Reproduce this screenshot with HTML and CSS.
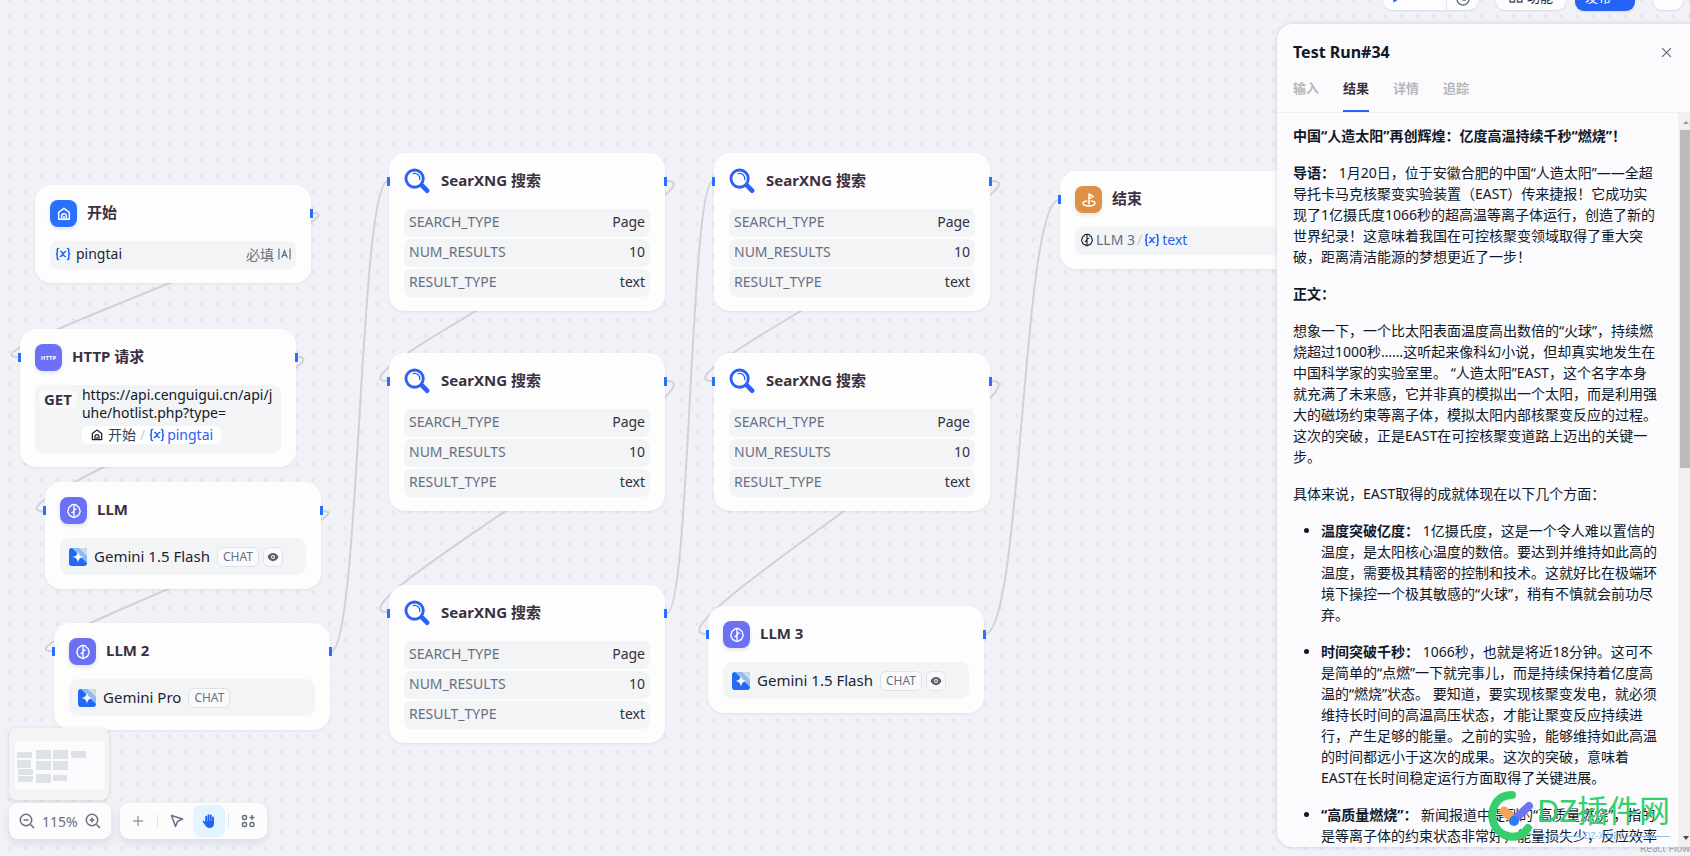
FILE: index.html
```html
<!DOCTYPE html>
<html lang="zh-CN">
<head>
<meta charset="utf-8">
<title>Workflow</title>
<link rel="stylesheet" href="styles.css">
</head>
<body>
<svg class="defs" aria-hidden="true">
  <defs>
    <symbol id="i-home" viewBox="0 0 24 24"><path d="M4 20V9.500L12 3.500L20 9.500V20Z" fill="none" stroke="currentColor" stroke-width="2.200" stroke-linejoin="round"/><path d="M8.500 20V15a3.500 3.500 0 0 1 7 0V20M12 20V15" fill="none" stroke="currentColor" stroke-width="2.200"/></symbol>
    <symbol id="i-brain" viewBox="0 0 24 24"><path d="M12 2.500C9.800 1.800 7.500 3 7 5C4.600 5.500 3.200 7.800 3.800 10C2.200 11.500 2.400 14.500 4.200 15.800C4.300 18.300 6.300 20 8.500 19.800C9.500 21.600 11 21.800 12 21.300C13 21.800 14.500 21.600 15.500 19.800C17.700 20 19.700 18.300 19.800 15.800C21.600 14.500 21.800 11.500 20.200 10C20.800 7.800 19.400 5.500 17 5C16.500 3 14.200 1.800 12 2.500ZM12 3V21M8 14.500C10 14.500 12 13.500 12 11M12 12C12 9.500 14 9 16 9" fill="none" stroke="currentColor" stroke-width="2"/></symbol>
    <symbol id="i-flag" viewBox="0 0 24 24"><path d="M12 18V3L18.500 6.500L12 10M8.500 13.500C5 14 3 15.300 3 17C3 19.300 7 21 12 21C17 21 21 19.300 21 17C21 15.300 19 14 15.500 13.500" fill="none" stroke="currentColor" stroke-width="2.200" stroke-linecap="round" stroke-linejoin="round"/></symbol>
    <symbol id="i-search" viewBox="0 0 28 28"><path d="M18 17.500L24 23.500" stroke="#2b62f5" stroke-width="5" stroke-linecap="round"/><circle cx="11" cy="11" r="9" fill="#fff" stroke="#2b62f5" stroke-width="3"/><path d="M9.500 5.800C13.500 4.800 17 8 16.300 12" fill="none" stroke="#2b62f5" stroke-width="1.300" stroke-linecap="round"/></symbol>
    <symbol id="i-gem" viewBox="0 0 18 18"><rect width="18" height="18" rx="3" fill="#2468f6"/><path d="M3 0H15A3 3 0 0 1 18 3V15L3 0Z" fill="#8cbcf8"/><path d="M10 0H15A3 3 0 0 1 18 3V8Z" fill="#d5dcda"/><path d="M9 3C9.500 7 11 8.500 15 9C11 9.500 9.500 11 9 15C8.500 11 7 9.500 3 9C7 8.500 8.500 7 9 3Z" fill="#fff"/></symbol>
    <symbol id="i-eye" viewBox="0 0 14 12"><path d="M0.500 6C3 -0.600 11 -0.600 13.500 6C11 12.600 3 12.600 0.500 6Z" fill="#5b5e6b"/><circle cx="7" cy="6" r="2.400" fill="#f5f5f7"/><circle cx="7" cy="6" r="1.200" fill="#5b5e6b"/></symbol>
    <symbol id="i-var" viewBox="0 0 16 14"><path d="M3.500 1.500C1.800 1.500 2.300 3.500 2.300 5C2.300 6.300 1.700 7 0.900 7C1.700 7 2.300 7.700 2.300 9C2.300 10.500 1.800 12.500 3.500 12.500M12.500 1.500C14.200 1.500 13.700 3.500 13.700 5C13.700 6.300 14.300 7 15.100 7C14.300 7 13.700 7.700 13.700 9C13.700 10.500 14.200 12.500 12.500 12.500M5.800 4.500C8 4 8 10 10.200 9.500M10.800 4.500C9 4.200 7 9.800 5.200 9.500" fill="none" stroke="#2563f5" stroke-width="1.500" stroke-linecap="round"/></symbol>
  </defs>
</svg>

<main class="canvas">
  <svg class="edges" aria-hidden="true">
    <path d="M312 213C376 213 -46 357 18 357"/>
    <path d="M297 357C357 357 -17 511 43 511"/>
    <path d="M322 511C382 511 -8 651 52 651"/>
    <path d="M331 651C360 651 359 181 388 181"/>
    <path d="M667 181C731 181 323 381 387 381"/>
    <path d="M667 381C731 381 323 612 387 612"/>
    <path d="M667 613C690 613 690 181 713 181"/>
    <path d="M992 181C1056 181 648 381 712 381"/>
    <path d="M992 381C1056 381 642 634 706 634"/>
    <path d="M985 634C1022 634 1022 200 1059 200"/>
  </svg>

  <section class="node out n-start">
    <header><span class="badge blue"><svg><use href="#i-home"/></svg></span><h2>开始</h2></header>
    <div class="row"><span class="var"><svg class="vx"><use href="#i-var"/></svg>pingtai</span><span class="req">必填 <svg class="txt" viewBox="0 0 14 12"><path d="M1 0V12M13 0V12M4 10L7 2.500L10 10M5 7.500H9" fill="none" stroke="#676f83" stroke-width="1.300"/></svg></span></div>
  </section>

  <section class="node in out n-http">
    <header><span class="badge violet"><b>HTTP</b></span><h2>HTTP 请求</h2></header>
    <div class="request"><span class="method">GET</span>
      <div class="url">https://api.cenguigui.cn/api/j<br>uhe/hotlist.php?type=<br><span class="chip"><svg class="mini"><use href="#i-home"/></svg>开始<i>/</i><em><svg class="vx"><use href="#i-var"/></svg>pingtai</em></span></div>
    </div>
  </section>

  <section class="node in out n-llm1">
    <header><span class="badge violet"><svg><use href="#i-brain"/></svg></span><h2>LLM</h2></header>
    <div class="model"><svg class="gem"><use href="#i-gem"/></svg><span>Gemini 1.5 Flash</span><small>CHAT</small><small class="see"><svg><use href="#i-eye"/></svg></small></div>
  </section>

  <section class="node in out n-llm2">
    <header><span class="badge violet"><svg><use href="#i-brain"/></svg></span><h2>LLM 2</h2></header>
    <div class="model"><svg class="gem"><use href="#i-gem"/></svg><span>Gemini Pro</span><small>CHAT</small></div>
  </section>

  <section class="node in out n-s1">
    <header><svg class="glass"><use href="#i-search"/></svg><h2>SearXNG 搜索</h2></header>
    <dl><div><dt>SEARCH_TYPE</dt><dd>Page</dd></div><div><dt>NUM_RESULTS</dt><dd>10</dd></div><div><dt>RESULT_TYPE</dt><dd>text</dd></div></dl>
  </section>
  <section class="node in out n-s2">
    <header><svg class="glass"><use href="#i-search"/></svg><h2>SearXNG 搜索</h2></header>
    <dl><div><dt>SEARCH_TYPE</dt><dd>Page</dd></div><div><dt>NUM_RESULTS</dt><dd>10</dd></div><div><dt>RESULT_TYPE</dt><dd>text</dd></div></dl>
  </section>
  <section class="node in out n-s3">
    <header><svg class="glass"><use href="#i-search"/></svg><h2>SearXNG 搜索</h2></header>
    <dl><div><dt>SEARCH_TYPE</dt><dd>Page</dd></div><div><dt>NUM_RESULTS</dt><dd>10</dd></div><div><dt>RESULT_TYPE</dt><dd>text</dd></div></dl>
  </section>
  <section class="node in out n-s4">
    <header><svg class="glass"><use href="#i-search"/></svg><h2>SearXNG 搜索</h2></header>
    <dl><div><dt>SEARCH_TYPE</dt><dd>Page</dd></div><div><dt>NUM_RESULTS</dt><dd>10</dd></div><div><dt>RESULT_TYPE</dt><dd>text</dd></div></dl>
  </section>
  <section class="node in out n-s5">
    <header><svg class="glass"><use href="#i-search"/></svg><h2>SearXNG 搜索</h2></header>
    <dl><div><dt>SEARCH_TYPE</dt><dd>Page</dd></div><div><dt>NUM_RESULTS</dt><dd>10</dd></div><div><dt>RESULT_TYPE</dt><dd>text</dd></div></dl>
  </section>

  <section class="node in out n-llm3">
    <header><span class="badge violet"><svg><use href="#i-brain"/></svg></span><h2>LLM 3</h2></header>
    <div class="model"><svg class="gem"><use href="#i-gem"/></svg><span>Gemini 1.5 Flash</span><small>CHAT</small><small class="see"><svg><use href="#i-eye"/></svg></small></div>
  </section>

  <section class="node in n-end">
    <header><span class="badge orange"><svg><use href="#i-flag"/></svg></span><h2>结束</h2></header>
    <div class="row"><span class="ref"><svg class="mini"><use href="#i-brain"/></svg>LLM 3<i>/</i><em><svg class="vx"><use href="#i-var"/></svg>text</em></span></div>
  </section>

  <span class="credit">React Flow</span>
</main>

<nav class="topbar">
  <div class="group"><button class="run" aria-label="运行"><svg viewBox="0 0 12 12"><path d="M2 0L11 5L2 11Z" fill="#2563f5"/></svg></button><button class="history" aria-label="历史"><svg viewBox="0 0 14 14"><circle cx="7" cy="7" r="6" fill="none" stroke="#676f83" stroke-width="1.500"/><path d="M7 3V8H10" fill="none" stroke="#676f83" stroke-width="1.500"/></svg></button></div>
  <button class="feature"><svg viewBox="0 0 14 14"><path d="M1 1H5.500V5.500H1ZM8.500 1H13V5.500H8.500ZM1 8.500H5.500V13H1ZM8.500 8.500H13V13H8.500Z" fill="none" stroke="#495464" stroke-width="1.400"/></svg>功能</button>
  <button class="publish">发布 <svg viewBox="0 0 10 10"><path d="M2 3L5 6L8 3" fill="none" stroke="#fff" stroke-width="1.500"/></svg></button>
  <button class="more" aria-label="更多"><svg viewBox="0 0 14 14"><path d="M5 8V12M5 8H9" fill="none" stroke="#676f83" stroke-width="1.500"/></svg></button>
</nav>

<aside class="panel">
  <header class="panel-head"><h1>Test Run#34</h1><button aria-label="关闭"><svg viewBox="0 0 10 10"><path d="M1 1L9 9M9 1L1 9" stroke="#676f83" stroke-width="1.200"/></svg></button></header>
  <div class="tabs" role="tablist"><button role="tab">输入</button><button role="tab" class="on" aria-selected="true">结果</button><button role="tab">详情</button><button role="tab">追踪</button></div>
  <div class="body">
    <article>
      <p><strong>中国“人造太阳”再创辉煌：亿度高温持续千秒“燃烧”！</strong></p>
      <p><strong>导语：</strong> 1月20日，位于安徽合肥的中国“人造太阳”——全超<br>导托卡马克核聚变实验装置（EAST）传来捷报！它成功实<br>现了1亿摄氏度1066秒的超高温等离子体运行，创造了新的<br>世界纪录！这意味着我国在可控核聚变领域取得了重大突<br>破，距离清洁能源的梦想更近了一步！</p>
      <p><strong>正文：</strong></p>
      <p>想象一下，一个比太阳表面温度高出数倍的“火球”，持续燃<br>烧超过1000秒……这听起来像科幻小说，但却真实地发生在<br>中国科学家的实验室里。 “人造太阳”EAST，这个名字本身<br>就充满了未来感，它并非真的模拟出一个太阳，而是利用强<br>大的磁场约束等离子体，模拟太阳内部核聚变反应的过程。<br>这次的突破，正是EAST在可控核聚变道路上迈出的关键一<br>步。</p>
      <p>具体来说，EAST取得的成就体现在以下几个方面：</p>
      <ul>
        <li><strong>温度突破亿度：</strong> 1亿摄氏度，这是一个令人难以置信的<br>温度，是太阳核心温度的数倍。要达到并维持如此高的<br>温度，需要极其精密的控制和技术。这就好比在极端环<br>境下操控一个极其敏感的“火球”，稍有不慎就会前功尽<br>弃。</li>
        <li><strong>时间突破千秒：</strong> 1066秒，也就是将近18分钟。这可不<br>是简单的“点燃”一下就完事儿，而是持续保持着亿度高<br>温的“燃烧”状态。 要知道，要实现核聚变发电，就必须<br>维持长时间的高温高压状态，才能让聚变反应持续进<br>行，产生足够的能量。之前的实验，能够维持如此高温<br>的时间都远小于这次的成果。这次的突破，意味着<br>EAST在长时间稳定运行方面取得了关键进展。</li>
        <li><strong>“高质量燃烧”：</strong> 新闻报道中提到的“高质量燃烧”，指的<br>是等离子体的约束状态非常好，能量损失少，反应效率</li>
      </ul>
    </article>
    <div class="track"><span class="up"></span><span class="thumb"></span><span class="down"></span></div>
  </div>
</aside>

<div class="minimap">
  <svg viewBox="0 0 90 48"><rect width="90" height="48" fill="#fbfbfd"/><g fill="#dee1e6"><rect x="2" y="11" width="15" height="6"/><rect x="2" y="19" width="14" height="8"/><rect x="3" y="28" width="15" height="6"/><rect x="3" y="35" width="15" height="6"/><rect x="21" y="9" width="15" height="9"/><rect x="21" y="20" width="15" height="9"/><rect x="21" y="33" width="15" height="9"/><rect x="38" y="9" width="15" height="9"/><rect x="38" y="20" width="15" height="9"/><rect x="38" y="34" width="14" height="6"/><rect x="56" y="10" width="15" height="7"/></g></svg>
</div>

<div class="tools">
  <div class="bar zoom">
    <button aria-label="缩小"><svg viewBox="0 0 16 16"><path d="M11.500 11.500L15 15M4.500 7H9.500" /><circle cx="7" cy="7" r="5.700"/></svg></button><span>115%</span><button aria-label="放大"><svg viewBox="0 0 16 16"><path d="M11.500 11.500L15 15M4.500 7H9.500M7 4.500V9.500"/><circle cx="7" cy="7" r="5.700"/></svg></button>
  </div>
  <div class="bar modes">
    <button class="add" aria-label="添加"><svg viewBox="0 0 16 16"><path d="M8 3V13M3 8H13"/></svg></button><hr>
    <button aria-label="指针"><svg viewBox="0 0 16 16"><path d="M2.500 2.500L13.500 6L8.500 8.500L6.500 13.500Z" stroke-linejoin="round"/></svg></button>
    <button class="on" aria-label="手形"><svg viewBox="0 0 16 16"><path d="M5.200 9V3.800M7.500 8V2.200M9.800 8V2.500M12 9V4.500" stroke="#2563f5" stroke-width="1.900" stroke-linecap="round"/><path d="M4.300 8H13V10.500C13 13.500 11 15 8.700 15C6.500 15 5.300 14 4.300 12.500L1.900 9C1.500 8 2.600 7.500 3.300 8.200L4.300 9.300Z" fill="#2563f5" stroke="none"/></svg></button><hr>
    <button aria-label="整理"><svg viewBox="0 0 16 16"><rect x="2.500" y="2.500" width="4" height="4" rx="1.500"/><rect x="2.500" y="9.500" width="4" height="4" rx="1.500"/><rect x="10" y="9.500" width="4" height="4" rx="1.500"/><path d="M12 2V7M9.500 4.500H14.500"/></svg></button>
  </div>
</div>

<div class="mark" aria-hidden="true">
  <svg viewBox="0 0 50 52"><path d="M25 5C8 5 2 22 7 34C13 48 32 52 41 38" fill="none" stroke="#36cf6d" stroke-width="8" stroke-linecap="round"/><path d="M17 21L24 27" stroke="#f5a55a" stroke-width="9" stroke-linecap="round"/><path d="M27 30L42 16" stroke="#6f74f3" stroke-width="8" stroke-linecap="round"/><circle cx="27" cy="31" r="5" fill="#2b7cf5"/></svg>
  <div><b>DZ插件网</b><p><span>DZ-X.NET</span></p></div>
</div>
</body>
</html>
```

FILE: styles.css
```css
* { box-sizing: border-box; }
body {
  margin: 0;
  height: 100vh;
  position: relative;
  overflow: hidden;
  font-family: "Noto Sans", "Noto Sans CJK SC", sans-serif;
  font-size: 14px;
  color: #1d2433;
}
h1, h2, p, dl, dd, ul { margin: 0; }
button { font: inherit; color: inherit; border: 0; background: none; padding: 0; }
svg { flex: none; }
.defs { position: absolute; width: 0; height: 0; }

.canvas {
  position: absolute;
  inset: 0;
  overflow: hidden;
  background: radial-gradient(circle, #e2e4ea 1px, transparent 2px) 1px 8px / 16px 16px, #f1f2f7;
}
.edges { position: absolute; inset: 0; width: 100%; height: 100%; }
.edges path { fill: none; stroke: #d0d2d9; stroke-width: 2; }

.node {
  position: absolute;
  width: 276px;
  padding: 15px 15px 14px;
  border-radius: 16px;
  background: #fdfdfe;
  box-shadow: 0 1px 3px rgba(30, 40, 70, .08);
}
.node.in::before, .node.out::after {
  content: "";
  position: absolute;
  top: 24px;
  width: 3px;
  height: 9px;
  background: #2970ff;
}
.node.in::before { left: -2px; }
.node.out::after { right: -2px; }
.node header { display: flex; align-items: center; gap: 10px; height: 27px; margin-bottom: 14px; }
.node h2 { padding-bottom: 3px; font-size: 15px; line-height: 20px; color: #3c3040; }

.n-start { left: 35px; top: 185px; }
.n-http { left: 20px; top: 329px; }
.n-llm1 { left: 45px; top: 482px; }
.n-llm2 { left: 54px; top: 623px; }
.n-s1 { left: 389px; top: 153px; }
.n-s2 { left: 389px; top: 353px; }
.n-s3 { left: 389px; top: 585px; }
.n-s4 { left: 714px; top: 153px; }
.n-s5 { left: 714px; top: 353px; }
.n-llm3 { left: 708px; top: 606px; }
.n-end { left: 1060px; top: 171px; }

.badge {
  display: flex;
  align-items: center;
  justify-content: center;
  width: 27px;
  height: 27px;
  border-radius: 8px;
  color: #fff;
  box-shadow: 0 2px 4px rgba(30, 40, 70, .12);
}
.badge svg { width: 16px; height: 16px; }
.badge b { font-size: 6px; }
.blue { background: #2970ff; }
.violet { background: #6b70f5; }
.orange { background: #dc9146; }
.glass { width: 27px; height: 27px; }

.row, dl div {
  display: flex;
  align-items: center;
  justify-content: space-between;
  height: 28px;
  padding: 0 5px 3px;
  border-radius: 7px;
  background: #f3f4f6;
}
.var, .req, .ref, .chip, .chip em, .ref em { display: flex; align-items: center; font-style: normal; }
.vx { width: 16px; height: 14px; }
.var .vx { margin-right: 5px; }
.req { gap: 4px; color: #6d7282; }
.txt { width: 13px; height: 12px; }
.mini { width: 14px; height: 14px; color: #1d2433; }
.ref { gap: 2px; color: #676f83; }
.ref i, .chip i { color: #c5c9d2; font-style: normal; }
.ref em, .chip em { gap: 2px; color: #2563f5; }

dl { display: grid; gap: 2px; }
dt { color: #676f83; }
dd { color: #30303f; }

.request { display: flex; gap: 5px; padding: 1px 4px 4px; min-height: 68px; border-radius: 8px; background: #f3f4f6; }
.method { height: 18px; margin-top: 4px; padding: 0 5px; border-radius: 5px; background: #fafafb; font-size: 15px; font-weight: 700; line-height: 18px; color: #3c3040; }
.url { line-height: 18px; white-space: nowrap; color: #111827; }
.chip { display: inline-flex; gap: 4px; height: 18px; margin-top: 4px; padding: 0 8px; border-radius: 6px; background: #fff; color: #354052; }

.model { display: flex; align-items: center; gap: 7px; height: 37px; padding: 0 9px; border-radius: 9px; background: #f3f4f6; font-size: 15px; }
.model > span { padding-bottom: 2px; }
.model small + small { margin-left: -3px; }
.gem { width: 18px; height: 18px; }
.model small { height: 20px; padding: 0 5px; border: 1px solid #e0e2e7; border-radius: 6px; background: #fafafc; font-size: 12px; line-height: 18px; color: #676f83; }
.model .see { display: flex; align-items: center; padding: 0 3px; }
.see svg { width: 12px; height: 10px; }

.credit { position: absolute; right: 0; bottom: 2px; font-size: 10px; line-height: 12px; color: #a0a3ab; }

.topbar { position: absolute; right: 7px; top: -22px; display: flex; gap: 18px; height: 33px; }
.topbar > * { border-radius: 9px; box-shadow: 0 1px 2px rgba(30, 40, 70, .12); }
.topbar button { display: flex; align-items: center; justify-content: center; }
.topbar svg { width: 14px; height: 14px; }
.group { display: flex; height: 32px; background: #fdfdfe; }
.group .run { width: 64px; justify-content: flex-start; padding: 6px 8px 0; border-right: 1px solid #e7e8ed; }
.group .history { width: 31px; padding-top: 10px; }
.topbar .feature { width: 70px; height: 32px; gap: 4px; padding-top: 4px; font-size: 13px; background: #fdfdfe; }
.topbar .publish { width: 60px; margin-left: -9px; padding-top: 3px; background: #2563f5; color: #fff; font-size: 13px; }
.topbar .more { width: 30px; height: 32px; background: #fdfdfe; }

.panel {
  position: absolute;
  top: 24px;
  right: 0;
  bottom: 9px;
  width: 413px;
  display: flex;
  flex-direction: column;
  overflow: hidden;
  border-radius: 16px 0 0 16px;
  background: #fbfbfd;
  box-shadow: 0 0 5px rgba(30, 40, 70, .16);
}
.panel-head { display: flex; align-items: center; justify-content: space-between; padding: 16px 18px 0 16px; }
.panel-head h1 { font-size: 16px; line-height: 24px; color: #101828; }
.panel-head svg { display: block; width: 11px; height: 11px; }
.tabs { display: flex; gap: 24px; padding: 0 16px; border-bottom: 1px solid #f0f1f4; }
.tabs button { padding: 15px 0 13px; border-bottom: 2px solid transparent; font-size: 13px; line-height: 18px; font-weight: 700; color: #b4b8bd; }
.tabs .on { border-color: #2563f5; color: #3c3040; }
.body { flex: 1; min-height: 0; display: flex; }
article { flex: 1; min-width: 0; overflow: hidden; padding: 12px 0 0 16px; line-height: 21px; white-space: nowrap; color: #101828; }
article p, article li { margin-bottom: 16px; }
article ul { padding-left: 28px; }
.track { display: flex; flex-direction: column; align-items: center; width: 12px; background: #f0f0f1; }
.thumb { width: 10px; height: 338px; margin-left: 2px; background: #babbbd; }
.up, .down { border: 3px solid transparent; }
.up { margin: 5px 0 6px 3px; border-bottom-color: #999; }
.down { margin: auto 0 4px 3px; border-top: 4px solid #4b4550; }

.minimap { position: absolute; left: 9px; bottom: 56px; width: 100px; height: 72px; padding: 13px 5px 0 6px; border-radius: 8px; background: #f4f4f5; box-shadow: 0 1px 4px rgba(30, 40, 70, .14); }
.minimap svg { display: block; width: 90px; height: 48px; }
.tools { position: absolute; left: 9px; bottom: 17px; display: flex; gap: 9px; }
.bar { display: flex; align-items: center; height: 36px; border-radius: 9px; background: #fcfcfd; box-shadow: 0 4px 8px rgba(30, 40, 70, .1); }
.bar svg { display: block; width: 16px; height: 16px; fill: none; stroke: #676f83; stroke-width: 1.5px; }
.zoom { gap: 7px; padding: 0 10px; color: #676f83; }
.modes { padding: 0 3px 0 2px; }
.modes button { display: flex; align-items: center; justify-content: center; width: 32px; height: 32px; border-radius: 8px; }
.modes .add svg { stroke: #9a9ea8; }
.modes .on { background: #e2f4fe; }
.modes hr { width: 1px; height: 14px; margin: 0 3px; border: 0; background: #e3e5ea; }

.mark { position: absolute; right: 20px; bottom: 14px; display: flex; color: #36cf6d; }
.mark svg { width: 50px; height: 52px; }
.mark b { display: block; font-size: 31px; line-height: 40px; font-weight: 400; }
.mark p { display: flex; align-items: center; gap: 4px; font-size: 9px; line-height: 12px; color: #8fc0f4; }
.mark p::before, .mark p::after { content: ""; flex: 1; height: 1px; background: #8fc0f4; }
```
